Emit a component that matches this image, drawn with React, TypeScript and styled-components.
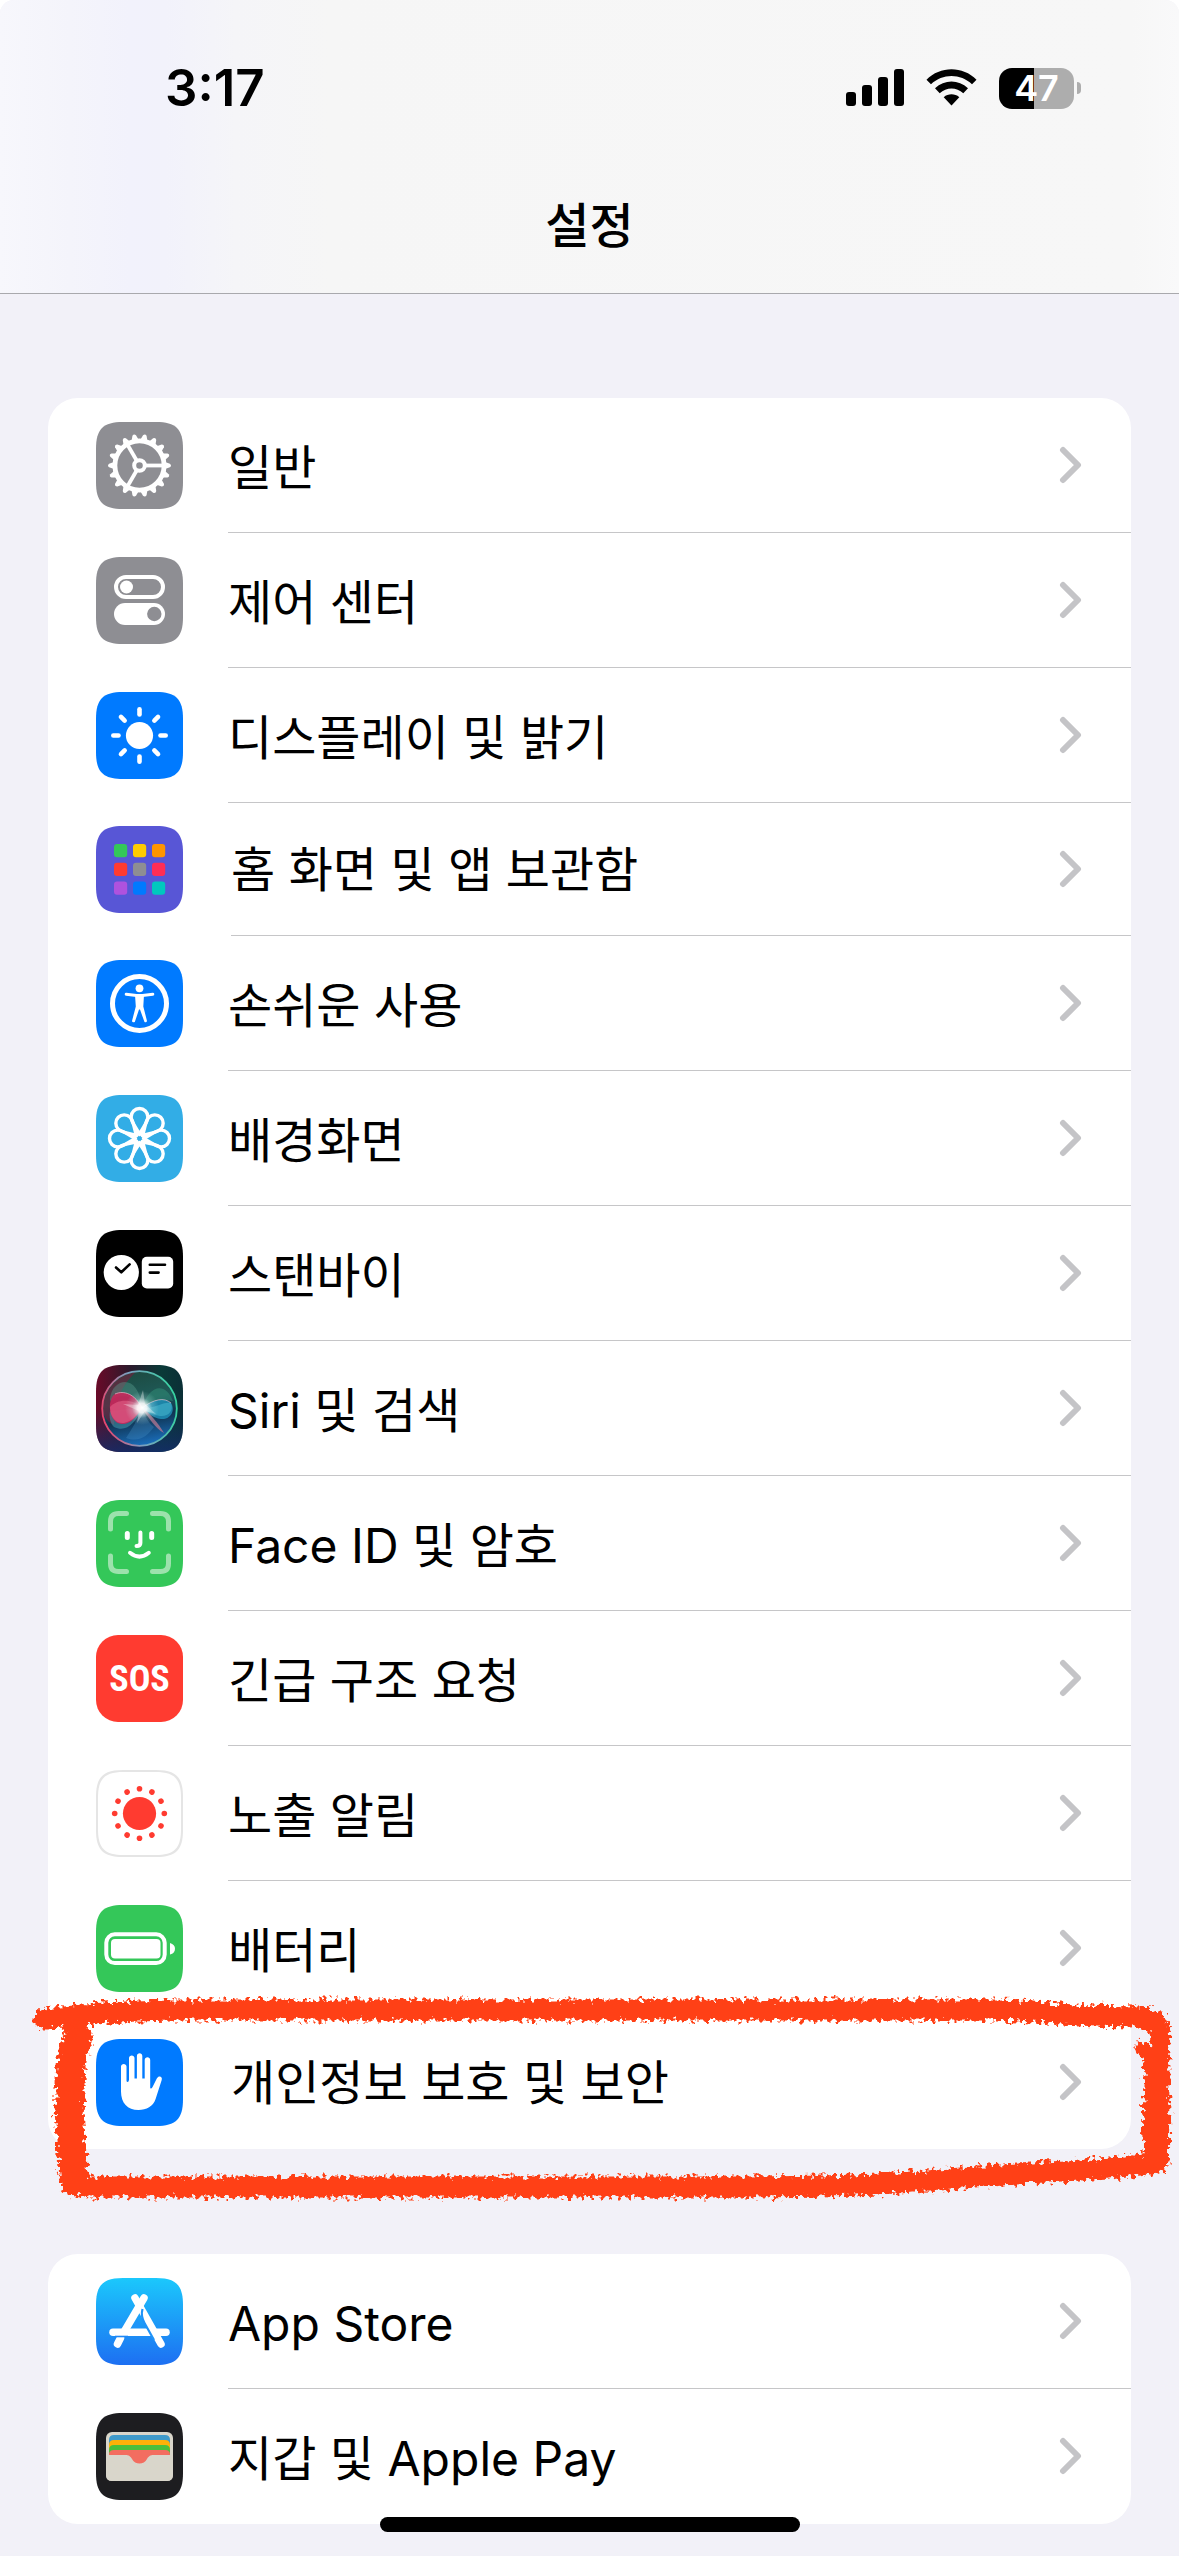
import React from "react";
import styled, { createGlobalStyle } from "styled-components";

const GlobalStyle = createGlobalStyle`
  * { box-sizing: border-box; }
  html { background: #ffffff; }
  body {
    margin: 0;
    font-family: Inter, "Noto Sans CJK KR", sans-serif;
    color: #000000;
  }
`;

const Screen = styled.div`
  min-height: 100vh;
  background: #f2f1f8;
  border-radius: 14px 14px 0 0;
  overflow: hidden;
`;

const Header = styled.header`
  display: flex;
  flex-direction: column;
  height: 294px;
  border-bottom: 1px solid #a9a9ad;
  background: linear-gradient(
    90deg,
    #f7f7fc 0%,
    #f4f4fb 6%,
    #f2f2fc 11%,
    #f2f2fb 14%,
    #f5f5f8 20%,
    #f6f6f6 28%,
    #f7f7f7 96%,
    #f9f9fa 100%
  );
`;

const StatusBar = styled.div`
  display: flex;
  align-items: center;
  justify-content: space-between;
  height: 176px;
  padding: 0 98px 0 165px;
`;

const Time = styled.time`
  font-size: 51px;
  font-weight: 600;
  line-height: 60px;
`;

const StatusIcons = styled.div`
  display: flex;
  align-items: center;
  gap: 22px;
`;

const Battery = styled.div`
  display: flex;
  align-items: center;
  gap: 3px;
`;

const BatteryBody = styled.div<{ $level: number }>`
  display: flex;
  align-items: center;
  justify-content: center;
  width: 75px;
  height: 41px;
  border-radius: 13px;
  background: linear-gradient(
    90deg,
    #000000 ${(p) => p.$level}%,
    #adadad ${(p) => p.$level}%
  );
  color: #ffffff;
  font-size: 36px;
  font-weight: 600;
  line-height: 40px;
`;

const BatteryNub = styled.span`
  width: 4px;
  height: 12px;
  border-radius: 0 4px 4px 0;
  background: #adadad;
`;

const Title = styled.h1`
  margin: 0;
  padding-top: 14px;
  text-align: center;
  font-size: 48px;
  font-weight: 500;
  line-height: 72px;
`;

const Main = styled.main`
  display: flex;
  flex-direction: column;
  gap: 105px;
  padding: 104px 48px 32px;
`;

const Card = styled.ul`
  margin: 0;
  padding: 0;
  list-style: none;
  border-radius: 30px;
  background: #ffffff;
`;

const Item = styled.li`
  position: relative;
`;

const RowBody = styled.span<{ $divider: boolean }>`
  display: flex;
  flex: 1;
  align-items: center;
  justify-content: space-between;
  padding-right: 48px;
  border-bottom: 1px solid ${(p) => (p.$divider ? "#c6c6c8" : "transparent")};
`;

const Label = styled.span`
  padding-top: 6px;
  font-size: 48px;
  line-height: 72px;
  white-space: nowrap;
`;

const Row = styled.a<{ $compact: boolean }>`
  display: flex;
  align-items: stretch;
  gap: ${(p) => (p.$compact ? 48 : 45)}px;
  height: ${(p) => (p.$compact ? 133 : 135)}px;
  padding-left: 48px;
  color: inherit;
  text-decoration: none;

  ${Label} {
    padding-top: ${(p) => (p.$compact ? 2 : 6)}px;
  }
`;

const IconSlot = styled.span`
  display: flex;
  flex: none;
  align-items: center;
`;

const Highlight = styled.svg`
  position: absolute;
  top: -26px;
  left: -48px;
  width: calc(100% + 96px);
  height: 215px;
  overflow: visible;
  pointer-events: none;
`;

const HomeIndicator = styled.div`
  position: fixed;
  bottom: 24px;
  left: 50%;
  width: 420px;
  height: 15px;
  border-radius: 8px;
  background: #000000;
  transform: translateX(-50%);
`;

const SQUIRCLE =
  "M0 27C0 7 7 0 27 0H60C80 0 87 7 87 27V60C87 80 80 87 60 87H27C7 87 0 80 0 60Z";

function Tile({ fill, children }: { fill: string; children?: React.ReactNode }) {
  return (
    <svg width="87" height="87" viewBox="0 0 87 87" aria-hidden="true">
      <path d={SQUIRCLE} fill={fill} />
      {children}
    </svg>
  );
}

const turns = (n: number) => Array.from({ length: n }, (_, i) => (i * 360) / n);

function GeneralIcon() {
  return (
    <Tile fill="#8e8e93">
      <g transform="translate(43.5 43.5)" fill="#fff">
        {turns(18).map((a) => (
          <path
            key={a}
            d="M-3.6 -25.5L-1.8 -30.4Q0 -32.6 1.8 -30.4L3.6 -25.5Z"
            transform={`rotate(${a + 10})`}
          />
        ))}
        <circle r="24.6" fill="none" stroke="#fff" strokeWidth="4.8" />
        <circle r="5.3" fill="none" stroke="#fff" strokeWidth="4" />
        {turns(3).map((a) => (
          <path key={a} d="M6 0H24" stroke="#fff" strokeWidth="3.8" transform={`rotate(${a})`} />
        ))}
      </g>
    </Tile>
  );
}

function ControlCenterIcon() {
  return (
    <Tile fill="#8e8e93">
      <rect x="20" y="20" width="47" height="20" rx="10" fill="none" stroke="#fff" strokeWidth="4" />
      <circle cx="30.5" cy="30" r="6.5" fill="#fff" />
      <rect x="18" y="46" width="51" height="22" rx="11" fill="#fff" />
      <circle cx="58.3" cy="57" r="7.2" fill="#8e8e93" />
    </Tile>
  );
}

function DisplayIcon() {
  return (
    <Tile fill="#007aff">
      <circle cx="43.5" cy="43.5" r="13.6" fill="#fff" />
      <g transform="translate(43.5 43.5)" stroke="#fff" strokeWidth="4.6" strokeLinecap="round">
        {turns(8).map((a) => (
          <path key={a} d="M0 -21V-26.2" transform={`rotate(${a})`} />
        ))}
      </g>
    </Tile>
  );
}

const GRID_COLORS = [
  "#34c759", "#ffcc00", "#ff9500",
  "#ff3b30", "#8e8e93", "#ff2d55",
  "#af52de", "#007aff", "#00c7be",
];

function HomeScreenIcon() {
  return (
    <Tile fill="#5856d6">
      {GRID_COLORS.map((color, i) => (
        <rect
          key={color}
          x={18 + (i % 3) * 19}
          y={18 + Math.floor(i / 3) * 18.8}
          width="13.2"
          height="13.2"
          rx="3"
          fill={color}
        />
      ))}
    </Tile>
  );
}

function AccessibilityIcon() {
  return (
    <Tile fill="#007aff">
      <circle cx="43.5" cy="43.5" r="27" fill="none" stroke="#fff" strokeWidth="5" />
      <circle cx="43.5" cy="28.3" r="3.9" fill="#fff" />
      <path
        d="M30.2 34.2L40.5 35.4H46.5L56.8 34.2M43.5 36V48"
        fill="none"
        stroke="#fff"
        strokeWidth="3"
        strokeLinecap="round"
      />
      <path
        d="M39 34.8H48L47.3 46.5L51 61Q50.5 63 48.5 62L44 49.5Q43.5 48 43 49.5L38.8 62Q36.3 63 36 61L39.8 46.5Z"
        fill="#fff"
      />
    </Tile>
  );
}

function WallpaperIcon() {
  return (
    <Tile fill="#32ade6">
      <g transform="translate(43.5 43.5)" fill="none" stroke="#fff" strokeWidth="3.4" strokeLinejoin="round">
        {turns(8).map((a) => (
          <path
            key={a}
            d="M0 -4C-3 -11 -8.4 -16 -8.4 -21.6A8.4 8.4 0 0 1 8.4 -21.6C8.4 -16 3 -11 0 -4Z"
            transform={`rotate(${a})`}
          />
        ))}
        <circle r="5.2" />
      </g>
    </Tile>
  );
}

function StandByIcon() {
  return (
    <Tile fill="#000">
      <circle cx="25.3" cy="42.5" r="17.6" fill="#fff" />
      <rect x="45.8" y="26.8" width="31.4" height="31.6" rx="5" fill="#fff" />
      <path
        d="M20 37.5L25.3 42.3L33.6 34.4M53.8 34.8H69M53.8 42.6H62.6"
        fill="none"
        stroke="#000"
        strokeWidth="2.6"
        strokeLinecap="round"
        strokeLinejoin="round"
      />
    </Tile>
  );
}

function SiriIcon() {
  return (
    <svg width="87" height="87" viewBox="0 0 87 87" aria-hidden="true">
      <defs>
        <clipPath id="siri-clip"><path d={SQUIRCLE} /></clipPath>
        <linearGradient id="siri-bg" x1="0" y1="0" x2="1" y2="0">
          <stop offset="0" stopColor="#6a0a28" />
          <stop offset="0.4" stopColor="#2b1a2c" />
          <stop offset="0.75" stopColor="#0a3a38" />
          <stop offset="1" stopColor="#0b2f36" />
        </linearGradient>
        <linearGradient id="siri-low" x1="0" y1="0" x2="0" y2="1">
          <stop offset="0.5" stopColor="#10305c" stopOpacity="0" />
          <stop offset="1" stopColor="#142c6a" stopOpacity="0.85" />
        </linearGradient>
        <linearGradient id="siri-ring" x1="0" y1="0.6" x2="1" y2="0.4">
          <stop offset="0" stopColor="#e8436c" />
          <stop offset="0.45" stopColor="#7aa0c0" />
          <stop offset="1" stopColor="#35d4a0" />
        </linearGradient>
        <linearGradient id="siri-orb" x1="0.3" y1="0" x2="0.5" y2="1">
          <stop offset="0" stopColor="#1c4a40" />
          <stop offset="0.4" stopColor="#1f5a58" />
          <stop offset="0.65" stopColor="#0f3350" />
          <stop offset="1" stopColor="#1a6cb8" />
        </linearGradient>
        <radialGradient id="siri-glow">
          <stop offset="0" stopColor="#fff" />
          <stop offset="0.28" stopColor="#fff" stopOpacity="0.85" />
          <stop offset="0.6" stopColor="#c8f4f0" stopOpacity="0.25" />
          <stop offset="1" stopColor="#c8f4f0" stopOpacity="0" />
        </radialGradient>
      </defs>
      <g clipPath="url(#siri-clip)">
        <rect width="87" height="87" fill="url(#siri-bg)" />
        <rect width="87" height="87" fill="url(#siri-low)" />
        <circle cx="43.5" cy="43.5" r="37" fill="url(#siri-orb)" />
        <path d="M7 43C8 24 22 10 40 7C28 18 20 30 18 60C10 56 7 50 7 43Z" fill="#7a1c3c" opacity="0.6" />
        <path d="M46 43C44 22 34 14 24 18C16 22 14 30 14 36C26 26 38 32 46 43Z" fill="#5aa090" opacity="0.4" />
        <path d="M46 43C54 18 70 18 77 36C65 33 55 37 46 43Z" fill="#38a081" opacity="0.4" />
        <path d="M46 43C40 58 30 68 18 62C14 58 13 52 14 46Z" fill="#4fb0c0" opacity="0.45" />
        <path d="M46 43C39 29 28 25 19 29C12 34 12 50 20 57C30 63 39 55 46 43Z" fill="#c8285c" opacity="0.9" />
        <path d="M46 43C38 34 22 33 14 42C14 52 20 59 28 58C37 56 42 49 46 43Z" fill="#ee6a90" opacity="0.5" />
        <path d="M46 43C58 34 68 32 75 38C80 46 74 55 65 54C57 53 51 47 46 43Z" fill="#1f93bc" opacity="0.8" />
        <path d="M46 43C58 44 68 36 75 38C78 46 72 52 64 51C57 50 51 47 46 43Z" fill="#58cce0" opacity="0.4" />
        <path d="M46 43C54 48 62 58 68 68C60 64 52 52 46 43Z" fill="#c07a94" opacity="0.7" />
        <path d="M46 43C42 54 36 64 30 73C44 78 52 70 58 62C52 58 49 50 46 43Z" fill="#4a94cc" opacity="0.3" />
        <path
          d="M46 43C39 29 28 25 19 29M46 43C58 34 68 32 75 38"
          fill="none"
          stroke="#f4c4d4"
          strokeWidth="0.8"
          opacity="0.8"
        />
        <circle cx="46" cy="43" r="17" fill="url(#siri-glow)" />
        <path d="M47 25L49 39L60 49L49 46L41 58L43 46L27 39L42 40Z" fill="#fff" opacity="0.35" />
        <circle cx="43.5" cy="43.5" r="37.3" fill="none" stroke="url(#siri-ring)" strokeWidth="1.8" />
      </g>
    </svg>
  );
}

function FaceIdIcon() {
  return (
    <Tile fill="#34c759">
      <g fill="none" strokeLinecap="round">
        <path
          d="M14.5 29V21.5Q14.5 13.5 22.5 13.5H30.5M56.5 13.5H64.5Q72.5 13.5 72.5 21.5V29M72.5 56V63.5Q72.5 71.5 64.5 71.5H56.5M30.5 71.5H22.5Q14.5 71.5 14.5 63.5V56"
          stroke="#9ce2ac"
          strokeWidth="5"
        />
        <path d="M31.3 33.5V37.5M55.7 33.5V37.5" stroke="#fff" strokeWidth="5" />
        <path d="M44.4 32.5V43Q44.4 46 40.5 46M34 52.8Q43.5 60.5 52.8 52.8" stroke="#fff" strokeWidth="4" />
      </g>
    </Tile>
  );
}

const SosTile = styled.span`
  display: flex;
  align-items: center;
  justify-content: center;
  width: 87px;
  height: 87px;
  border-radius: 22px;
  background: #ff3b30;
  color: #ffffff;
  font-family: "Roboto Condensed", "Liberation Sans Narrow", Roboto, sans-serif;
  font-size: 36px;
  font-weight: 700;
  line-height: 48px;
`;

function ExposureIcon() {
  return (
    <svg width="87" height="87" viewBox="0 0 87 87" aria-hidden="true">
      <path d={SQUIRCLE} fill="#e5e5e5" />
      <path d={SQUIRCLE} fill="#fff" transform="translate(2 2) scale(0.954)" />
      <g transform="translate(43.5 43.5)" fill="#ff3b30">
        <circle r="16.6" />
        {turns(12).map((a) => (
          <circle key={a} cy="-24.8" r="2.8" transform={`rotate(${a})`} />
        ))}
      </g>
    </svg>
  );
}

function BatteryIcon() {
  return (
    <Tile fill="#34c759">
      <rect x="10.3" y="29.3" width="58.4" height="28.8" rx="8.5" fill="none" stroke="#fff" strokeWidth="4" />
      <rect x="15" y="34" width="49.5" height="19.5" rx="4" fill="#fff" />
      <path d="M74 38Q79 39.5 79 43.7Q79 48 74 49.6Z" fill="#fff" />
    </Tile>
  );
}

function PrivacyIcon() {
  return (
    <Tile fill="#007aff">
      <path
        d="M25 27.5C25 24 30.5 24 30.5 27.5V41.5Q30.5 43 31.7 43Q33 42.5 33 40.5V19C33 15.5 38.5 15.5 38.5 19V39.5H40.9V17C40.9 13.2 46.3 13.2 46.3 17V39.5H48.7V21C48.7 17.2 54.2 17.2 54.2 21V49Q55.5 50.5 56.8 47.5L60.8 39.5C62.6 36 66.8 37.3 65.7 41L59.6 60C57 67.5 50.5 71 42.5 71C31.5 71 25 64 25 52.5Z"
        fill="#fff"
      />
    </Tile>
  );
}

function AppStoreIcon() {
  return (
    <svg width="87" height="87" viewBox="0 0 87 87" aria-hidden="true">
      <defs>
        <linearGradient id="store-bg" x1="0" y1="0" x2="0" y2="1">
          <stop offset="0" stopColor="#1bc8fc" />
          <stop offset="1" stopColor="#1d6ff2" />
        </linearGradient>
      </defs>
      <path d={SQUIRCLE} fill="url(#store-bg)" />
      <g fill="none" stroke="#fff" strokeLinecap="round" strokeWidth="7.5">
        <path d="M17 54.2H70" />
        <path d="M48 20L28 54" />
        <path d="M39 20L65 66" />
        <path d="M24.5 60L21.5 66" />
      </g>
      <path d="M46.5 31Q44.5 38 48.5 45L58 62" fill="none" stroke="#1f93f8" strokeWidth="2.2" />
      <path d="M19 58.5H32" stroke="#1e88f7" strokeWidth="1.6" />
      <path d="M36 50H45L41 41.5Z" fill="#1e96f9" />
    </svg>
  );
}

function WalletIcon() {
  return (
    <Tile fill="#1d1d20">
      <rect x="10" y="19" width="67" height="49" rx="6" fill="#d9d6cb" />
      <path d="M13 27Q13 22 18 22H69Q74 22 74 27V42H13Z" fill="#3f9aca" />
      <path d="M13 32Q13 27 18 27H69Q74 27 74 32V42H13Z" fill="#fdb108" />
      <path d="M13 37Q13 32 18 32H69Q74 32 74 37V42H13Z" fill="#4bbf3b" />
      <path d="M13 41.5Q13 37 18 37H69Q74 37 74 41.5V52H13Z" fill="#f36d60" />
      <path
        d="M10 42H29C33 42 34.5 43.5 36 46C39 52 48 52 51 46C52.5 43.5 54 42 58 42H77V62Q77 68 71 68H16Q10 68 10 62Z"
        fill="#d9d6cb"
      />
    </Tile>
  );
}

function Signal() {
  return (
    <svg width="58" height="38" viewBox="0 0 58 38" role="img" aria-label="신호">
      <rect x="0" y="23" width="10" height="14" rx="3" />
      <rect x="16" y="16" width="10" height="21" rx="3" />
      <rect x="32" y="8" width="10" height="29" rx="3" />
      <rect x="48" y="0" width="10" height="37" rx="3" />
    </svg>
  );
}

function Wifi() {
  return (
    <svg width="51" height="38" viewBox="0 0 51 38" role="img" aria-label="Wi-Fi">
      <path d="M0.5 10.7C14 -3.3 37 -3.3 50.5 10.7L46 15.3C34.5 4.2 16.5 4.2 5 15.3Z" />
      <path d="M9 19.3C18.5 10.3 32.5 10.3 42 19.3L37.3 24.2C30.5 17.8 20.5 17.8 13.7 24.2Z" />
      <path d="M17.7 28.2C22.2 24.4 28.8 24.4 33.3 28.2L25.5 36.5Z" />
    </svg>
  );
}

function Chevron() {
  return (
    <svg width="24" height="40" viewBox="0 0 24 40" aria-hidden="true">
      <path
        d="M4 5L19 20L4 35"
        fill="none"
        stroke="#c4c4c7"
        strokeWidth="6"
        strokeLinecap="round"
        strokeLinejoin="round"
      />
    </svg>
  );
}

function CrayonBox() {
  return (
    <Highlight viewBox="0 0 1179 215" preserveAspectRatio="none" aria-hidden="true">
      <defs>
        <filter id="crayon" filterUnits="userSpaceOnUse" x="0" y="-20" width="1179" height="260">
          <feTurbulence type="fractalNoise" baseFrequency="0.22" numOctaves="2" seed="7" result="noise" />
          <feDisplacementMap
            in="SourceGraphic"
            in2="noise"
            scale="14"
            xChannelSelector="R"
            yChannelSelector="G"
            result="rough"
          />
          <feGaussianBlur in="rough" stdDeviation="0.7" />
        </filter>
      </defs>
      <g filter="url(#crayon)" fill="none" stroke="#ff4015" strokeLinecap="round" strokeLinejoin="round">
        <path d="M44 29C90 24 120 21 172 20H1000C1050 22 1075 27 1140 27Q1157 28 1160 40" strokeWidth="21" />
        <path d="M1160 38C1161 80 1160 120 1160 172" strokeWidth="18" />
        <path d="M1142 58C1150 62 1153 80 1151 104C1150 124 1147 140 1151 160" strokeWidth="14" />
        <path d="M1157 173C1120 179 1050 181 962 188C880 196 800 197 720 197H88" strokeWidth="21" />
        <path d="M78 47C66 80 72 100 69 122C72 150 70 160 75 192" strokeWidth="29" />
      </g>
    </Highlight>
  );
}

type Entry = {
  label: string;
  icon: React.ReactNode;
  compact?: boolean;
  highlighted?: boolean;
};

const GROUPS: Entry[][] = [
  [
    { label: "일반", icon: <GeneralIcon /> },
    { label: "제어 센터", icon: <ControlCenterIcon /> },
    { label: "디스플레이 및 밝기", icon: <DisplayIcon /> },
    { label: "홈 화면 및 앱 보관함", icon: <HomeScreenIcon />, compact: true },
    { label: "손쉬운 사용", icon: <AccessibilityIcon /> },
    { label: "배경화면", icon: <WallpaperIcon /> },
    { label: "스탠바이", icon: <StandByIcon /> },
    { label: "Siri 및 검색", icon: <SiriIcon /> },
    { label: "Face ID 및 암호", icon: <FaceIdIcon /> },
    { label: "긴급 구조 요청", icon: <SosTile>SOS</SosTile> },
    { label: "노출 알림", icon: <ExposureIcon /> },
    { label: "배터리", icon: <BatteryIcon /> },
    { label: "개인정보 보호 및 보안", icon: <PrivacyIcon />, compact: true, highlighted: true },
  ],
  [
    { label: "App Store", icon: <AppStoreIcon /> },
    { label: "지갑 및 Apple Pay", icon: <WalletIcon /> },
  ],
];

export default function App() {
  return (
    <>
      <GlobalStyle />
      <Screen>
        <Header>
          <StatusBar>
            <Time>3:17</Time>
            <StatusIcons>
              <Signal />
              <Wifi />
              <Battery>
                <BatteryBody $level={47}>47</BatteryBody>
                <BatteryNub />
              </Battery>
            </StatusIcons>
          </StatusBar>
          <Title>설정</Title>
        </Header>
        <Main>
          {GROUPS.map((group) => (
            <Card key={group[0].label}>
              {group.map((entry, i) => (
                <Item key={entry.label}>
                  <Row href="#" $compact={!!entry.compact}>
                    <IconSlot>{entry.icon}</IconSlot>
                    <RowBody $divider={i < group.length - 1}>
                      <Label>{entry.label}</Label>
                      <Chevron />
                    </RowBody>
                  </Row>
                  {entry.highlighted && <CrayonBox />}
                </Item>
              ))}
            </Card>
          ))}
        </Main>
        <HomeIndicator />
      </Screen>
    </>
  );
}
